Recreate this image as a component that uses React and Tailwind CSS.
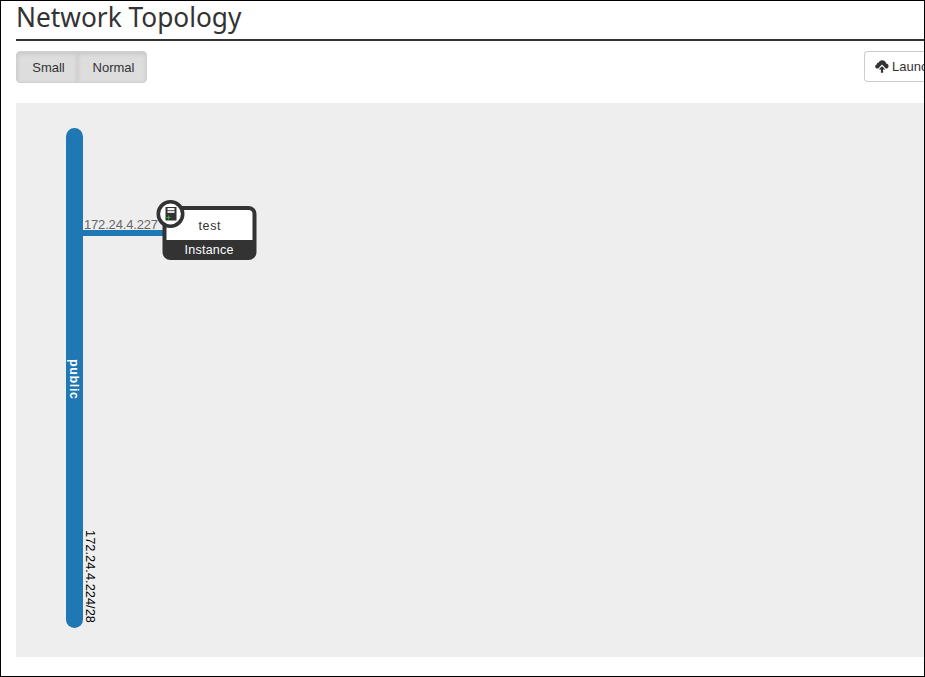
function LaunchIcon() {
  return (
    <svg viewBox="0 0 14 13" className="h-[13px] w-[14px] shrink-0" fill="#333333">
      <path d="M3.200 8.600H2.300C1 8.600.2 7.700.2 6.500c0-1 .6-1.800 1.600-2C1.700 3.200 2.600 2.400 3.800 2.500 4.300 1 5.500.2 7.200.2c2.200 0 3.700 1.300 3.900 3.200 1.500 0 2.500 1.100 2.500 2.500 0 1.600-1 2.700-2.600 2.700h-.2L7 4.600z" />
      <path d="M7 6.300l3.300 3.300H8.100v3.200H5.900V9.600H3.700z" />
    </svg>
  );
}

function Toolbar() {
  return (
    <div className="mt-[10px] flex h-8 justify-between">
      <div className="flex text-[13px] text-[#333]">
        <button className="flex h-8 w-[62px] items-center justify-center rounded-l border border-[#d0d0d0] bg-[#dddddd] pt-[2px] pl-[3px] shadow-[inset_0_2px_4px_rgba(0,0,0,0.1)]">
          Small
        </button>
        <button className="-ml-px flex h-8 w-[70px] items-center justify-center rounded-r border border-[#d0d0d0] bg-[#dddddd] pt-[2px] pl-[3px] shadow-[inset_0_2px_4px_rgba(0,0,0,0.1)]">
          Normal
        </button>
      </div>
      <button className="flex h-[31px] w-[60px] items-center gap-[3px] overflow-hidden whitespace-nowrap rounded-l border border-r-0 border-[#ccc] bg-white pl-[10px] text-[13px] text-[#333]">
        <LaunchIcon />
        <span>Launch Instance</span>
      </button>
    </div>
  );
}

function Topology() {
  return (
    <svg
      viewBox="0 0 908 554"
      className="mt-5 block h-[554px] w-[908px] bg-[#eeeeee] font-['Liberation_Sans',Arial,sans-serif]"
    >
      <rect x="50" y="25" width="17" height="500" rx="8.5" fill="#1f77b4" />
      <rect x="66" y="127" width="84" height="6" fill="#1f77b4" />
      <text x="68" y="126" fontSize="13" fill="#666666" textLength="74">172.24.4.227</text>
      <text transform="translate(54 256) rotate(90)" fontSize="12.500" fontWeight="bold" fill="#ffffff" textLength="40">public</text>
      <text transform="translate(70 427) rotate(90)" fontSize="13" fill="#000000" textLength="93" lengthAdjust="spacingAndGlyphs">172.24.4.224/28</text>

      <rect x="148.500" y="105" width="90" height="50" rx="6" fill="#ffffff" stroke="#333333" strokeWidth="4" />
      <path d="M147 137h93v12a7 7 0 0 1-7 7h-79a7 7 0 0 1-7-7z" fill="#333333" />
      <text x="182.500" y="127" fontSize="12.500" fill="#333333" textLength="22">test</text>
      <text x="168.500" y="151" fontSize="12.500" fill="#ffffff" textLength="49">Instance</text>

      <circle cx="154.500" cy="111" r="12.200" fill="#ffffff" stroke="#333333" strokeWidth="3.600" />
      <rect x="149.500" y="104" width="11" height="13.500" fill="#333333" />
      <rect x="151.500" y="105" width="7" height="2.300" fill="#f4f4f4" />
      <rect x="151.500" y="108" width="7" height="2" fill="#dddddd" />
      <path d="M152.500 112.500v4M150.500 114.500h4" stroke="#31b52b" strokeWidth="1" />
    </svg>
  );
}

export default function App() {
  return (
    <main className="h-[677px] w-[925px] overflow-hidden border border-black bg-white pl-[15px] font-['Liberation_Sans',Arial,sans-serif]">
      <h1 className="flex h-10 items-center border-b-2 border-[#333] pb-[9px] font-['Noto_Sans',sans-serif] text-[28px] leading-[32px] text-[#333]">
        <span className="origin-left scale-x-[0.938]">Network Topology</span>
      </h1>
      <Toolbar />
      <Topology />
    </main>
  );
}
